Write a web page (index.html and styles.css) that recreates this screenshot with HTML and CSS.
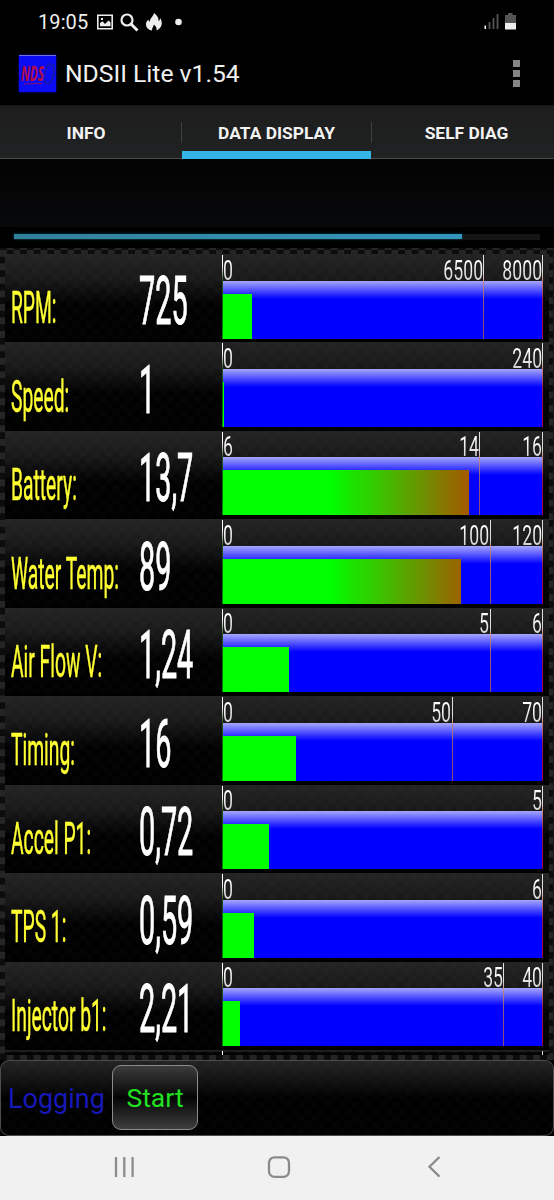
FILE: index.html
```
<!DOCTYPE html>
<html lang="en">
<head>
<meta charset="utf-8">
<title>NDSII Lite v1.54</title>
<link rel="stylesheet" href="styles.css">
</head>
<body>
<div class="screen">
  <header class="status">
    <span class="clock">19:05</span>
    <svg class="status-icons" width="90" height="20" viewBox="0 0 90 20">
      <path fill="#eee" fill-rule="evenodd" d="M1 2.500h16v15H1zM2.600 4v12h12.800V4zM4 14.200V11l2.500-1.800L9 12l3.500-3.500 2 1.800v3.900zM5 6h2v2H5z"/>
      <circle cx="31" cy="8" r="5.500" fill="none" stroke="#eee" stroke-width="2.200"/>
      <path d="M35 12l6.500 6.500" stroke="#eee" stroke-width="3"/>
      <path fill="#eee" d="M58 1c3 2 5 5 4.500 8 1.500-.5 1.500-2 1.500-3 3 4 2.500 10-3.500 12.500.5-2.500-.5-4-2.500-6-.5 2-2 3-2 6-3 0-6.500-3-6-7 .3-2 1.500-3 2.500-4 0 1 .3 2 1.500 2C53.500 6.500 57 5 58 1z"/>
      <circle cx="82.500" cy="10" r="3.300" fill="#eee"/>
    </svg>
    <svg class="signal" width="34" height="20" viewBox="0 0 34 20">
      <path d="M2.300 14.500v3.500" stroke="#eee" stroke-width="1.600"/>
      <path d="M6.500 11v7M10.500 7v11M14.500 3v15" stroke="#555" stroke-width="1.800"/>
      <path fill="#555" d="M25 2h4.500v2H33v8H22V4h3z"/>
      <path fill="#eee" d="M22 12h11v6.500H22z"/>
    </svg>
  </header>

  <div class="appbar">
    <div class="logo">
      <svg width="37" height="37" viewBox="0 0 37 37">
        <ellipse cx="30" cy="18" rx="4.500" ry="10" fill="none" stroke="#1c1c96" stroke-width="2" stroke-dasharray="2 1" transform="rotate(12 30 18)"/>
        <path d="M5 28l18-.5" stroke="#83116a" stroke-width="1.200"/>
        <text class="logo-text" x="2" y="25" textLength="23" lengthAdjust="spacingAndGlyphs">NDS</text>
      </svg>
    </div>
    <h1 class="title">NDSII Lite v1.54</h1>
    <div class="overflow"><i></i><i></i><i></i></div>
  </div>

  <nav class="tabs">
    <div class="tab tab-info">INFO</div>
    <div class="tab tab-active">DATA DISPLAY</div>
    <div class="tab tab-diag">SELF DIAG</div>
  </nav>

  <div class="spacer"></div>
  <div class="progress"><div class="track"><div class="fill"></div></div></div>

  <main class="panel">
    <section class="row">
      <div class="label"><span>RPM:</span></div><div class="value"><span>725</span></div>
      <div class="gauge"><div class="bar"><div class="level" style="width:9.06%"></div></div>
        <div class="tick start"><b>0</b></div><div class="tick warn" style="left:81.25%"><b>6500</b></div><div class="tick max"><b>8000</b></div></div>
    </section>
    <section class="row">
      <div class="label"><span>Speed:</span></div><div class="value"><span>1</span></div>
      <div class="gauge"><div class="bar"><div class="level" style="width:0.5%"></div></div>
        <div class="tick start"><b>0</b></div><div class="tick max"><b>240</b></div></div>
    </section>
    <section class="row">
      <div class="label"><span>Battery:</span></div><div class="value"><span>13,7</span></div>
      <div class="gauge"><div class="bar"><div class="level" style="width:76.8%"></div></div>
        <div class="tick start"><b>6</b></div><div class="tick warn" style="left:80%"><b>14</b></div><div class="tick max"><b>16</b></div></div>
    </section>
    <section class="row">
      <div class="label"><span>Water Temp:</span></div><div class="value"><span>89</span></div>
      <div class="gauge"><div class="bar"><div class="level" style="width:74.17%"></div></div>
        <div class="tick start"><b>0</b></div><div class="tick warn" style="left:83.33%"><b>100</b></div><div class="tick max"><b>120</b></div></div>
    </section>
    <section class="row">
      <div class="label"><span>Air Flow V:</span></div><div class="value"><span>1,24</span></div>
      <div class="gauge"><div class="bar"><div class="level" style="width:20.67%"></div></div>
        <div class="tick start"><b>0</b></div><div class="tick warn" style="left:83.33%"><b>5</b></div><div class="tick max"><b>6</b></div></div>
    </section>
    <section class="row">
      <div class="label"><span>Timing:</span></div><div class="value"><span>16</span></div>
      <div class="gauge"><div class="bar"><div class="level" style="width:22.86%"></div></div>
        <div class="tick start"><b>0</b></div><div class="tick warn" style="left:71.43%"><b>50</b></div><div class="tick max"><b>70</b></div></div>
    </section>
    <section class="row">
      <div class="label"><span>Accel P1:</span></div><div class="value"><span>0,72</span></div>
      <div class="gauge"><div class="bar"><div class="level" style="width:14.4%"></div></div>
        <div class="tick start"><b>0</b></div><div class="tick max"><b>5</b></div></div>
    </section>
    <section class="row">
      <div class="label"><span>TPS 1:</span></div><div class="value"><span>0,59</span></div>
      <div class="gauge"><div class="bar"><div class="level" style="width:9.83%"></div></div>
        <div class="tick start"><b>0</b></div><div class="tick max"><b>6</b></div></div>
    </section>
    <section class="row">
      <div class="label"><span>Injector b1:</span></div><div class="value"><span>2,21</span></div>
      <div class="gauge"><div class="bar"><div class="level" style="width:5.53%"></div></div>
        <div class="tick start"><b>0</b></div><div class="tick warn" style="left:87.5%"><b>35</b></div><div class="tick max"><b>40</b></div></div>
    </section>
    <section class="row row-clipped">
      <div></div><div></div>
      <div class="gauge"><div class="tick start"></div><div class="tick max"></div></div>
    </section>
  </main>

  <footer class="logging">
    <span class="logging-label">Logging</span>
    <button class="start-button">Start</button>
  </footer>

  <div class="navbar">
    <svg width="554" height="65" viewBox="0 0 554 65" fill="none" stroke="#8b8b8b" stroke-width="2.300">
      <path d="M116 21v20M124.300 21v20M132.600 21v20"/>
      <rect x="269" y="21.300" width="20" height="19.500" rx="5.500"/>
      <path d="M439.500 21l-10 9.800 10 9.800"/>
    </svg>
  </div>
</div>
</body>
</html>
```

FILE: styles.css
```
* { box-sizing: border-box; }
body { margin: 0; background: #000; font-family: Roboto, "Liberation Sans", sans-serif; }
.screen { width: 554px; height: 1200px; overflow: hidden; display: flex; flex-direction: column; background: #000; }
.screen > * { flex: none; }

.status { height: 44px; display: flex; align-items: center; padding: 0 37px 0 38px; color: #eee; }
.clock { width: 58px; font-size: 20px; letter-spacing: 0.1px; line-height: 44px; }
.status-icons { display: block; margin-top: -1px; }
.signal { display: block; margin-left: auto; margin-top: -2px; }

.appbar { height: 61px; display: flex; align-items: center; padding: 0 34px 4px 19px; }
.logo { width: 37px; height: 37px; margin-top: 2px; background: #0c0cf4; border-top: 1px solid #7070d8; box-shadow: 0 0 2px #00c; }
.logo svg { display: block; }
.logo-text { font: italic bold 21px "Open Sans", sans-serif; fill: #b40b42; }
.title { margin: 3px 0 0 9px; font-size: 24.700px; font-weight: 400; color: #f0f0f0; line-height: 36px; white-space: nowrap; }
.overflow { margin: 2px 0 0 auto; display: flex; flex-direction: column; gap: 3px; }
.overflow i { width: 7px; height: 7px; background: #858585; }

.tabs { height: 54px; display: flex; border-top: 1px solid #151515; background: linear-gradient(#1d1d1d, #202223); }
.tab { height: 53px; text-align: center; font-size: 17.400px; font-weight: 700; line-height: 55px; color: #f2f2f2; border-bottom: 1px solid #4a4a4a; white-space: nowrap; }
.tab-info { width: 182px; padding-right: 10px; background: linear-gradient(#404040, #404040) 181px 16px / 1px 21px no-repeat; }
.tab-active { width: 189px; border-bottom: 8px solid #33b5e5; }
.tab-diag { width: 183px; padding-left: 8px; background: linear-gradient(#404040, #404040) 0 16px / 1px 21px no-repeat; }

.spacer { height: 68px; background: linear-gradient(#030303, #07080a); }
.progress { height: 21px; padding: 7px 14px 0; background: #000; }
.track { height: 6px; background: #151515; }
.fill { width: 448px; height: 5px; background: linear-gradient(90deg, #32809a, #3496bd); box-shadow: 0 0 3px #07465c; }

.panel {
  height: 812px; padding: 6px 5px 0 5.300px; overflow: hidden;
  background: conic-gradient(#0c0c0c 25%, #252525 0 50%, #0c0c0c 0 75%, #252525 0) 0 2px / 13.500px 13.500px;
}
.row {
  height: 88.460px; display: grid; grid-template-columns: 131px 86.200px 321px; overflow: hidden;
  background:
    linear-gradient(rgba(37,37,37,.95), rgba(26,26,26,.9) 28%, rgba(0,0,0,.9) 58%, rgba(0,0,0,.93) 97%, #000),
    conic-gradient(#0c0c0c 25%, #303030 0 50%, #0c0c0c 0 75%, #303030 0) 0 0 / 13.500px 13.500px;
}
.label span, .value span { display: inline-block; white-space: nowrap; transform-origin: 0 0; line-height: 88px; }
.label { padding: 11.200px 0 0 5.600px; font-size: 43.600px; color: #ffff32; }
.label span { transform: scaleX(.442); -webkit-text-stroke: .5px #ffff32; }
.value { padding: 4.400px 0 0 2.300px; font-size: 66px; color: #fff; }
.value span { transform: scaleX(.437); -webkit-text-stroke: 1px #fff; }

.gauge { position: relative; height: 84.500px; padding-top: 26.500px; }
.bar { height: 58px; padding-top: 13px; background: linear-gradient(#a6a6ff, #00f 18px); }
.level { height: 45px; background: linear-gradient(90deg, #0f0 108px, #a35a00 246px); }
.tick { position: absolute; top: 1px; bottom: 0; width: 1px; background: linear-gradient(#ddd 22%, #bd8b80 32%, #8a5a85 55%, #8b4a75); }
.tick.start { left: 0; background: linear-gradient(#fff 10px, #185018 26px, #008800); }
.tick.max { left: 320px; background: linear-gradient(#ddd 20%, #c58b80 30%, #980b62 55%, #a0004c); }
.tick b {
  position: absolute; top: 2.500px; right: 1.500px; font-size: 28.500px; font-weight: 400; line-height: 26px;
  transform: scaleX(.62); transform-origin: 100% 0;
  color: transparent; background: linear-gradient(#fff 20%, #c8c8c8); -webkit-background-clip: text; background-clip: text;
}
.tick.start b { left: 1px; right: auto; transform-origin: 0 0; }
.row-clipped { height: 5px; }

.logging {
  height: 75.500px; display: flex; align-items: flex-start; padding: 4px 7px;
  border: 1px solid #4c4c4c; border-radius: 9px;
  background:
    linear-gradient(rgba(37,37,37,.95), rgba(0,0,0,.92) 50%, rgba(0,0,0,.93)),
    conic-gradient(#0c0c0c 25%, #303030 0 50%, #0c0c0c 0 75%, #303030 0) 0 0 / 13.500px 13.500px;
}
.logging-label { width: 104px; font-size: 27px; line-height: 68px; color: #1818b8; letter-spacing: 0; }
.start-button {
  width: 86px; height: 65px; padding: 0; border: 1px solid #8c8c8c; border-radius: 9px;
  background: linear-gradient(#3c3c3c, #050505 50%, #3e3e3e); color: #22e022; font: 400 26.500px Roboto, sans-serif;
}
.navbar { height: 65px; background: #f1f1f1; }
.navbar svg { display: block; }
```
